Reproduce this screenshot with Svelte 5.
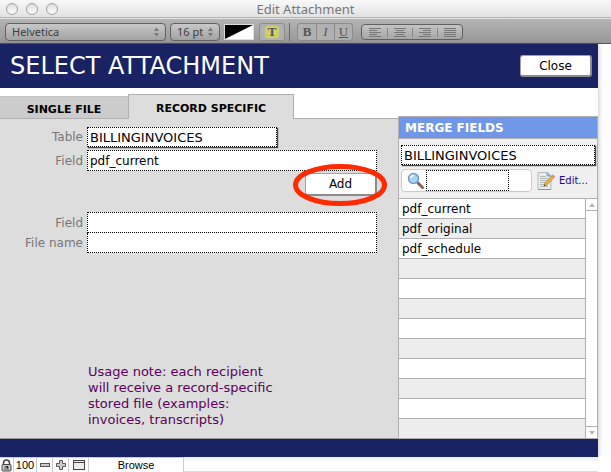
<script>
  let tab = "record";
  let table = "BILLINGINVOICES";
  let mergeTable = "BILLINGINVOICES";
  let field = "pdf_current";
  let search = "";

  const fields = ["pdf_current", "pdf_original", "pdf_schedule"];
  const rows = [...fields, ...new Array(12 - fields.length).fill("")];

  // line lengths of each alignment glyph, as [start, width]
  const aligns = [
    { name: "Left", lines: [[0, 12], [0, 8], [0, 12], [0, 8], [0, 12]] },
    { name: "Center", lines: [[0, 12], [2, 8], [0, 12], [2, 8], [0, 12]] },
    { name: "Right", lines: [[0, 12], [4, 8], [0, 12], [4, 8], [0, 12]] },
    { name: "Justify", lines: [[0, 12], [0, 12], [0, 12], [0, 12], [0, 12]] }
  ];
</script>

<div class="window">
  <header class="titlebar">
    <div class="lights"><i></i><i></i><i></i></div>
    <span class="title">Edit Attachment</span>
  </header>

  <div class="toolbar">
    <div class="picker family">
      <select aria-label="Font"><option>Helvetica</option></select>
      <svg width="5" height="10" viewBox="0 0 5 10"><path d="M0 4L2.5 0.5L5 4ZM0 6L2.5 9.500L5 6Z" fill="#777" /></svg>
    </div>
    <div class="picker size">
      <select aria-label="Size"><option>16 pt</option></select>
      <svg width="5" height="10" viewBox="0 0 5 10"><path d="M0 4L2.5 0.5L5 4ZM0 6L2.5 9.500L5 6Z" fill="#777" /></svg>
    </div>
    <button class="swatch" aria-label="Text color">
      <svg width="28" height="14" viewBox="0 0 28 14" preserveAspectRatio="none">
        <rect width="28" height="14" fill="#fff" />
        <path d="M0 0H28L0 14Z" fill="#000" />
      </svg>
    </button>
    <button class="highlight"><span>T</span></button>
    <div class="divider"></div>
    <div class="styles">
      <button><b>B</b></button>
      <button><em>I</em></button>
      <button><u>U</u></button>
    </div>
    <div class="aligns">
      {#each aligns as align}
        <button aria-label={align.name}>
          <svg width="12" height="9" viewBox="0 0 12 9">
            {#each align.lines as [x, width], i}
              <rect {x} y={i * 2} {width} height="1" fill="#777" />
            {/each}
          </svg>
        </button>
      {/each}
    </div>
  </div>

  <div class="page">
    <div class="banner">
      <h1>SELECT ATTACHMENT</h1>
      <button class="push close">Close</button>
    </div>

    <main>
      <section class="left">
        <div class="tabs">
          <button class:active={tab === "single"} on:click={() => (tab = "single")}>SINGLE FILE</button>
          <button class="wide" class:active={tab === "record"} on:click={() => (tab = "record")}>RECORD SPECIFIC</button>
          <div class="rest"></div>
        </div>

        <div class="body">
          <div class="form">
            <label for="table">Table</label>
            <select id="table" class="box drop" bind:value={table}>
              <option>BILLINGINVOICES</option>
            </select>
            <label for="field">Field</label>
            <input id="field" class="box" bind:value={field} />
          </div>
          <div class="actions">
            <div class="add">
              <button class="push">Add</button>
              <svg class="ring" width="96" height="44" viewBox="0 0 96 44">
                <ellipse cx="48" cy="22" rx="44.500" ry="18.500" fill="none" stroke="#ff2a00" stroke-width="5" />
              </svg>
            </div>
          </div>
          <div class="form joined">
            <label for="chosen">Field</label>
            <input id="chosen" class="box" />
            <label for="filename">File name</label>
            <input id="filename" class="box" />
          </div>
          <p class="note">Usage note: each recipient will receive a record-specific stored file (examples: invoices, transcripts)</p>
        </div>
      </section>

      <aside>
        <h2>MERGE FIELDS</h2>
        <div class="filter">
          <select class="box drop" aria-label="Merge table" bind:value={mergeTable}>
            <option>BILLINGINVOICES</option>
          </select>
          <div class="tools">
            <div class="search">
              <svg width="18" height="18" viewBox="0 0 18 18">
                <path d="M9.500 9.500L11 11" stroke="#999" stroke-width="2" />
                <path d="M11 11L15.500 15.500" stroke="#86645c" stroke-width="3" stroke-linecap="round" />
                <circle cx="6.500" cy="6.500" r="5" fill="#a9d3f5" stroke="#6f9ccb" stroke-width="1.500" />
                <path d="M3.500 6Q4 3.500 7 3.500" fill="none" stroke="#fff" stroke-width="1.500" />
              </svg>
              <input class="box" aria-label="Search fields" bind:value={search} />
            </div>
            <svg width="18" height="20" viewBox="0 0 18 20">
              <path d="M1 1.500H10L14 5V18.500H1Z" fill="#e9edef" stroke="#b4b8ba" />
              <path d="M1 18.500H14" stroke="#8c9092" />
              <path d="M3 5.500H9M3 7.500H11M3 9.500H10M3 11.500H8M3 13.500H7M3 15.500H11" stroke="#b2b7ba" />
              <path d="M10 1.500V5H14Z" fill="#8fc3e8" stroke="#7faccc" />
              <path d="M7 15L8 12L15 4.500L17 6.500L10 14Z" fill="#f0b43c" stroke="#a87420" stroke-width=".7" />
              <path d="M15 4.500L16 3.500L18 5.500L17 6.500Z" fill="#d3806a" />
              <path d="M7 15L7.500 13.500L8.500 14.500Z" fill="#222" />
            </svg>
            <a href="#edit">Edit...</a>
          </div>
        </div>
        <div class="portal">
          <ul>
            {#each rows as row}
              <li>{row}</li>
            {/each}
          </ul>
          <div class="scroll">
            <button aria-label="Scroll up"><svg width="6" height="4" viewBox="0 0 6 4"><path d="M0 4L3 0L6 4Z" fill="#b5b5b5" /></svg></button>
            <button aria-label="Scroll down"><svg width="6" height="4" viewBox="0 0 6 4"><path d="M0 0L3 4L6 0Z" fill="#b5b5b5" /></svg></button>
          </div>
        </div>
      </aside>
    </main>
    <div class="bottom"></div>
  </div>

  <footer>
    <button class="lock" aria-label="Lock">
      <svg width="11" height="13" viewBox="0 0 11 13">
        <path d="M2.500 6V4Q2.500 1 5.500 1T8.500 4V6" fill="none" stroke="#444" stroke-width="1.500" />
        <rect x="1" y="5.500" width="9" height="6.500" rx="1" fill="#ccc" stroke="#444" />
        <path d="M3 8H8M3 10H8" stroke="#555" />
        <path d="M4.500 7H7V10Z" fill="#222" />
      </svg>
    </button>
    <span class="zoom">100</span>
    <button class="step" aria-label="Zoom out">
      <svg width="10" height="4" viewBox="0 0 10 4"><rect x=".5" y=".5" width="9" height="3" fill="#ccc" stroke="#555" /></svg>
    </button>
    <button class="step" aria-label="Zoom in">
      <svg width="10" height="10" viewBox="0 0 10 10"><path d="M3.500 .5H6.500V3.500H9.500V6.500H6.500V9.500H3.500V6.500H.5V3.500H3.500Z" fill="#ccc" stroke="#555" /></svg>
    </button>
    <button class="pane" aria-label="Status area">
      <svg width="12" height="10" viewBox="0 0 12 10"><rect x=".5" y=".5" width="11" height="9" fill="#eee" stroke="#444" /><path d="M1 2.500H11" stroke="#444" /></svg>
    </button>
    <button class="mode">Browse</button>
    <div class="track"></div>
  </footer>
</div>

<style>
  :global(body) {
    margin: 0;
    background: #fdfdfd;
  }

  .window {
    --navy: #192263;
    --line: #b0b0b0;
    --gray: #ddd;
    font-family: "DejaVu Sans", Verdana, sans-serif;
    font-size: 12px;
    color: #000;
  }

  .window * {
    box-sizing: border-box;
  }

  button,
  select,
  input {
    font: inherit;
    color: inherit;
    margin: 0;
    padding: 0;
    border: 0;
    border-radius: 0;
    background: none;
    appearance: none;
    outline: 0;
  }

  svg {
    display: block;
    flex: none;
  }

  .titlebar {
    display: grid;
    grid-template-columns: 1fr auto 1fr;
    align-items: center;
    height: 18px;
    background: linear-gradient(#f8f8f8, #e2e2e2);
    border-bottom: 1px solid #b4b4b4;
    font-family: "Noto Sans", sans-serif;
    font-size: 13px;
    line-height: 16px;
    color: #777;
  }

  .lights {
    display: flex;
    gap: 8px;
    padding-left: 6px;
  }
  .lights i {
    width: 12px;
    height: 12px;
    border: 1px solid #a0a0a0;
    border-radius: 50%;
    background: linear-gradient(#ddd, #fff);
  }

  .toolbar {
    display: flex;
    align-items: center;
    height: 26px;
    padding: 2px 5px 0;
    background: linear-gradient(#b4b4b4, #979797);
    border-top: 1px solid #e4e4e4;
    border-bottom: 1px solid #555;
    font-size: 11px;
    color: #3c3c3c;
  }

  .picker {
    display: flex;
    align-items: center;
    height: 18px;
    margin-right: 4px;
    padding: 0 6px;
    border: 1px solid #606060;
    border-radius: 4px;
    background: linear-gradient(#c8c8c8, #a2a2a2);
    font-family: "Noto Sans", sans-serif;
  }
  .picker select {
    flex: 1;
    min-width: 0;
    height: 16px;
    line-height: 16px;
  }
  .family {
    width: 161px;
  }
  .size {
    width: 50px;
  }

  .swatch {
    margin-right: 5px;
    border: 1px solid #ddd;
    height: 16px;
  }

  .highlight,
  .styles {
    display: flex;
    align-items: center;
    justify-content: center;
    height: 18px;
    border: 1px solid #8c8c8c;
    border-radius: 3px;
    background: #b0b0b0;
    font-family: "Liberation Serif", serif;
    font-size: 13px;
    line-height: 14px;
    color: #555;
  }
  .highlight {
    width: 26px;
  }
  .highlight span {
    width: 14px;
    line-height: 12px;
    border-radius: 4px;
    background: #d0cf6c;
    box-shadow: 0 0 2px #d0cf6c;
    font-weight: bold;
  }
  .divider {
    width: 1px;
    height: 18px;
    margin: 0 7px 0 4px;
    background: #666;
  }
  .styles button {
    width: 18px;
    height: 16px;
  }
  .styles button + button {
    border-left: 1px solid #8c8c8c;
  }

  .aligns {
    display: flex;
    align-items: center;
    height: 16px;
    margin-left: 8px;
    border: 1px solid #606060;
    border-radius: 4px;
    background: linear-gradient(#c4c4c4, #a6a6a6);
  }
  .aligns button {
    display: flex;
    justify-content: center;
    width: 25px;
  }
  .aligns button + button {
    border-left: 1px solid #888;
  }

  .page {
    margin-right: 13px;
    box-shadow: 1px 0 4px rgba(0, 0, 0, 0.2);
    background: #fff;
  }

  .banner {
    display: flex;
    align-items: center;
    justify-content: space-between;
    height: 44px;
    padding: 0 6px 0 10px;
    background: var(--navy);
  }
  h1 {
    margin: 0;
    font-size: 24px;
    font-weight: 400;
    line-height: 40px;
    color: #fff;
  }

  .push {
    width: 72px;
    height: 22px;
    border: 1px solid #a0a0a0;
    border-right: 2px solid #8c8c8c;
    border-bottom: 2px solid #8c8c8c;
    border-radius: 3px;
    background: #fff;
  }

  main {
    display: flex;
  }

  .left {
    flex: 1;
    display: flex;
    flex-direction: column;
    min-width: 0;
    border-bottom: 1px solid #999;
  }

  .tabs {
    display: flex;
    align-items: flex-end;
    height: 31px;
    font-size: 11px;
    font-weight: bold;
  }
  .tabs button {
    width: 128px;
    height: 23px;
    padding-top: 3px;
    border-top: 1px solid #c4c4c4;
    border-bottom: 1px solid var(--line);
    background: #ccc;
  }
  .tabs .wide {
    width: 166px;
  }
  .tabs .active {
    height: 25px;
    border: 1px solid var(--line);
    border-bottom: 0;
    background: var(--gray);
  }
  .rest {
    flex: 1;
    border-bottom: 1px solid var(--line);
  }

  .body {
    flex: 1;
    display: flex;
    flex-direction: column;
    padding: 8px 21px 10px 0;
    background: var(--gray);
  }

  .form {
    display: grid;
    grid-template-columns: 83px 1fr;
    column-gap: 4px;
    row-gap: 3px;
    align-items: center;
  }
  .form label {
    text-align: right;
    color: #777;
  }
  .form .drop {
    width: 190px;
  }
  .joined {
    row-gap: 0;
  }
  .joined .box + label + .box {
    border-top: 0;
    height: 20px;
  }

  .box {
    width: 100%;
    min-width: 0;
    height: 21px;
    padding: 0 2px;
    border: 1px dotted #000;
    background: #fff;
  }
  .drop {
    height: 20px;
    font-size: 13px;
    box-shadow: 1px 1px 1px #444;
  }

  .actions {
    display: flex;
    justify-content: flex-end;
    padding: 2px 0 16px;
  }
  .add {
    position: relative;
    height: 23px;
  }
  .add .push {
    height: 23px;
  }
  .ring {
    position: absolute;
    left: -13px;
    top: -10px;
    pointer-events: none;
  }

  .note {
    width: 200px;
    margin: auto 0 0 88px;
    font-size: 13px;
    line-height: 16px;
    color: #5c005c;
  }

  aside {
    display: flex;
    flex-direction: column;
    width: 200px;
    margin-top: 28px;
    border: 1px solid var(--line);
    background: #f0f0f0;
  }
  h2 {
    margin: 0;
    padding: 2px 0 0 6px;
    border-bottom: 1px solid var(--line);
    background: #7097e7;
    font-size: 12px;
    line-height: 19px;
    color: #fff;
  }

  .filter {
    padding: 6px 2px;
  }
  .filter .drop {
    width: 194px;
  }
  .tools {
    display: flex;
    align-items: center;
    margin-top: 4px;
  }
  .search {
    display: flex;
    align-items: center;
    width: 131px;
    height: 23px;
    margin-right: 5px;
    padding-left: 5px;
    border: 1px solid #ccc;
    border-radius: 4px;
    background: #fff;
  }
  .search .box {
    width: 83px;
    margin-left: 1px;
  }
  .tools a {
    margin-left: 4px;
    font-size: 10px;
    color: #2000a0;
    text-decoration: none;
  }

  .portal {
    display: flex;
    border-top: 1px solid var(--line);
  }
  ul {
    flex: 1;
    margin: 0;
    padding: 0;
    list-style: none;
    background: #fff;
  }
  li {
    height: 20px;
    padding-left: 3px;
    border-bottom: 1px solid var(--line);
    line-height: 20px;
  }
  li:nth-child(even) {
    background: #ededed;
  }
  li:last-child {
    height: 19px;
    border-bottom: 0;
  }

  .scroll {
    display: flex;
    flex-direction: column;
    justify-content: space-between;
    width: 12px;
    border-left: 1px solid var(--line);
    background: #fff;
  }
  .scroll button {
    display: flex;
    align-items: center;
    justify-content: center;
    height: 12px;
    border-bottom: 1px solid var(--line);
  }
  .scroll button:last-child {
    border-top: 1px solid var(--line);
    border-bottom: 0;
  }

  .bottom {
    height: 18px;
    background: var(--navy);
  }

  footer {
    display: flex;
    height: 15px;
    background: #fff;
    font-family: "Liberation Sans", Arial, sans-serif;
    font-size: 11px;
  }
  footer button,
  .zoom {
    display: flex;
    align-items: center;
    justify-content: center;
    border-top: 1px solid #ccc;
    border-right: 1px solid #ccc;
  }
  .lock {
    width: 14px;
  }
  .zoom {
    width: 23px;
  }
  .step {
    width: 16px;
  }
  .pane {
    width: 20px;
  }
  .mode {
    width: 95px;
  }
  .track {
    flex: 1;
    margin-right: 13px;
    border-bottom: 1px solid #ddd;
    background: linear-gradient(#eee, #fff 6px);
  }
</style>
